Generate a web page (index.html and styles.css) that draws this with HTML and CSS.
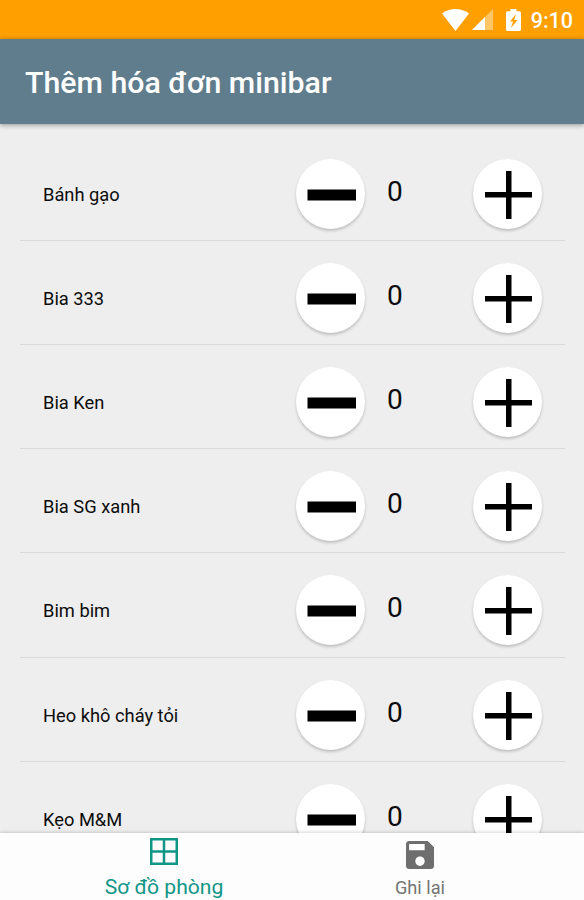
FILE: index.html
```html
<!DOCTYPE html>
<html lang="vi">
<head>
    <meta charset="UTF-8">
    <meta name="viewport" content="width=device-width, initial-scale=1.0">
    <title>Thêm hóa đơn minibar</title>
    <link rel="stylesheet" href="styles.css">
</head>
<body>
    <!-- Status bar -->
    <div class="status-bar">
        <svg class="wifi" viewBox="0 0 27 22"><path d="M0 4.5C7.5-1.5 19.5-1.5 27 4.5L13.5 22Z" fill="#fff"/></svg>
        <svg class="signal" viewBox="0 0 21 21"><path d="M0 21L21 0V21Z" fill="#fff" opacity=".4"/><path d="M0 21L13 8V21Z" fill="#fff"/></svg>
        <svg class="battery" viewBox="0 0 15 22"><path d="M4.5 0H10.5V2.2H13.5Q15 2.2 15 3.7V20.5Q15 22 13.5 22H1.5Q0 22 0 20.5V3.7Q0 2.2 1.5 2.2H4.5Z" fill="#fff"/><path d="M10 5L4 12.5H7L5 19L11.5 11H8.2Z" fill="#ffa000"/></svg>
        <span class="clock">9:10</span>
    </div>

    <header class="app-bar">
        <h1>Thêm hóa đơn minibar</h1>
    </header>

    <!-- Minibar items -->
    <main class="list" id="list"></main>

    <!-- Bottom navigation -->
    <nav class="bottom-nav">
        <a class="tab active">
            <svg class="grid-icon" viewBox="0 0 28 27"><path d="M1.25 1.25H26.75V25.75H1.25ZM14 1V26M1 13.5H27" fill="none" stroke="#109687" stroke-width="2.5"/></svg>
            <span>Sơ đồ phòng</span>
        </a>
        <a class="tab">
            <svg class="save-icon" viewBox="3 3 18 18"><path d="M17 3H5c-1.11 0-2 .9-2 2v14c0 1.1.89 2 2 2h14c1.1 0 2-.9 2-2V7l-4-4zm-5 16c-1.66 0-3-1.34-3-3s1.34-3 3-3 3 1.34 3 3-1.34 3-3 3zm3-10H5V5h10v4z" fill="#6e6e6e"/></svg>
            <span>Ghi lại</span>
        </a>
    </nav>

    <script src="app.js"></script>
</body>
</html>
```
FILE: styles.css
```css
* {
    box-sizing: border-box;
}
body {
    margin: 0;
    height: 900px;
    display: flex;
    flex-direction: column;
    overflow: hidden;
    background: #eeeeee;
    font-family: Roboto, "Noto Sans", sans-serif;
    color: #0c0c0c;
}
svg {
    display: block;
}
.status-bar {
    flex: none;
    height: 39px;
    display: flex;
    align-items: center;
    justify-content: flex-end;
    padding-right: 11px;
    background: #ffa000;
    color: #fff;
}
.wifi {
    width: 27px;
    height: 22px;
    margin-right: 3px;
}
.signal {
    width: 21px;
    height: 21px;
    margin-right: 13px;
}
.battery {
    width: 15px;
    height: 22px;
    margin-right: 10px;
}
.clock {
    font-size: 21.5px;
    font-weight: 500;
    line-height: 24px;
    padding-top: 2px;
}
.app-bar {
    flex: none;
    z-index: 1;
    height: 85px;
    display: flex;
    align-items: center;
    padding: 2px 25px 0;
    background: #607d8d;
    box-shadow: 0 1px 5px rgba(0,0,0,0.4);
}
.app-bar h1 {
    margin: 0;
    color: #fff;
    font-size: 30.3px;
    font-weight: 500;
    line-height: 36px;
    white-space: nowrap;
}
.list {
    flex: 1;
    min-height: 0;
    overflow: hidden;
    padding: 12.6px 19px 0 20px;
}
.row {
    height: 104.2px;
    display: grid;
    grid-template-columns: 276px 91px 86px 1fr;
    align-items: start;
    padding-top: 22px;
    border-bottom: 1px solid #dadada;
}
.name {
    padding: 24px 0 0 23px;
    font-size: 18.3px;
    line-height: 24px;
}
.count {
    padding-top: 16px;
    font-size: 28px;
    line-height: 34px;
}
.round-btn {
    width: 69px;
    height: 70px;
    padding: 0;
    border: none;
    border-radius: 50%;
    background: #fff;
    box-shadow: 0 2px 3px rgba(0,0,0,0.2);
}
.round-btn svg {
    width: 70px;
    height: 70px;
}
.bottom-nav {
    flex: none;
    z-index: 1;
    height: 67px;
    display: flex;
    padding: 0 36px;
    background: #fdfdfd;
    box-shadow: 0 -1px 3px rgba(0,0,0,0.16);
}
.tab {
    flex: 1;
    display: flex;
    flex-direction: column;
    align-items: center;
    color: #747474;
    font-size: 18.2px;
    line-height: 24px;
    padding-top: 8px;
}
.tab.active {
    color: #109687;
    font-size: 21.1px;
    padding-top: 5px;
}
.grid-icon {
    width: 28px;
    height: 27px;
    margin-bottom: 10px;
}
.save-icon {
    width: 28px;
    height: 28px;
    margin-bottom: 7px;
}
```
FILE: app.js
```js
const items = ['Bánh gạo', 'Bia 333', 'Bia Ken', 'Bia SG xanh', 'Bim bim', 'Heo khô cháy tỏi', 'Kẹo M&amp;M'];

const minus = '<svg viewBox="0 0 70 70"><path d="M11.5 30.5H60V41.5H11.5Z"/></svg>';
const plus = '<svg viewBox="0 0 70 70"><path d="M12 33H59V38.5H12ZM33 12H38.5V60H33Z"/></svg>';

document.getElementById('list').innerHTML = items.map(name => `
    <div class="row">
        <span class="name">${name}</span>
        <button class="round-btn">${minus}</button>
        <span class="count">0</span>
        <button class="round-btn">${plus}</button>
    </div>
`).join('');
```
